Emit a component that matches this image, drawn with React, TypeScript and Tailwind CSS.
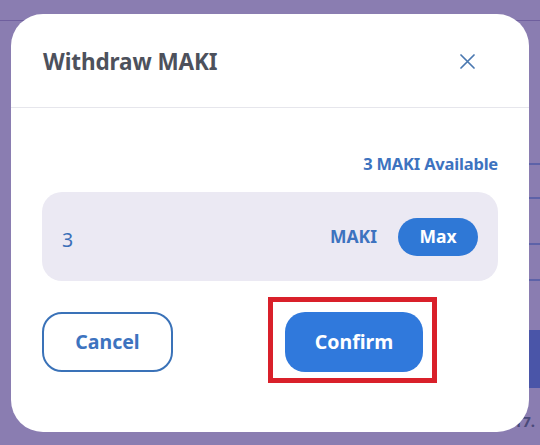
import React from "react";

export default function App() {
  return (
    <div
      className="relative w-[540px] h-[445px] overflow-hidden bg-[#8a7db1]"
      style={{ fontFamily: '"Noto Sans", "Open Sans", sans-serif' }}
    >
      {/* background hints behind overlay */}
      <div className="absolute left-0 right-0 top-[20px] h-px bg-[#6f5f9e]" />
      <div className="absolute left-[528px] right-0 top-[163px] h-[2px] bg-[#5d62a8]" />
      <div className="absolute left-[528px] right-0 top-[197px] h-[2px] bg-[#5d62a8]" />
      <div className="absolute left-[528px] right-0 top-[243px] h-[2px] bg-[#5d62a8]" />
      <div className="absolute left-[528px] right-0 top-[279px] h-[2px] bg-[#5d62a8]" />
      <div className="absolute left-[528px] right-0 top-[330px] h-[58px] bg-[#4a55a8]" />
      <div className="absolute left-[505px] top-[410px] text-[15px] font-bold text-[#4a4a7a]">617.</div>

      {/* modal */}
      <div className="absolute left-[11px] top-[14px] w-[518px] h-[418px] rounded-[32px] bg-white flex flex-col">
        <div className="h-[94px] flex items-center justify-between pt-[3px] pl-[32px] pr-[54px] border-b border-[#e6e6ec]">
          <h2 className="text-[22.5px] font-bold text-[#4d515c] tracking-[-0.1px]">Withdraw MAKI</h2>
          <svg width="15" height="15" viewBox="0 0 15 15" className="text-[#4a78b0] mb-[2px]">
            <path d="M1 1 L14 14 M14 1 L1 14" stroke="currentColor" strokeWidth="1.7" strokeLinecap="round" />
          </svg>
        </div>
        <div className="flex flex-col px-[31px]">
          <div className="flex justify-end mt-[45px] h-[22px] items-center">
            <span className="text-[16.5px] font-bold text-[#3d73bf] tracking-[-0.2px]">3 MAKI Available</span>
          </div>
          <div className="mt-[17px] h-[89px] rounded-[20px] bg-[#ebe9f3] flex items-center pl-[20px] pr-[20px]">
            <span className="text-[19.5px] text-[#3a6fb8] flex-1 pt-[6px]">3</span>
            <span className="text-[17.5px] font-bold text-[#3d73bf] mr-[21px]">MAKI</span>
            <button className="w-[80px] h-[38px] rounded-full bg-[#2f78d6] text-white text-[17.5px] font-bold">Max</button>
          </div>
          <div className="mt-[31px] flex items-start">
            <button className="w-[131px] h-[60px] rounded-[20px] border-2 border-[#3a72b8] text-[#3d73bf] text-[19.5px] font-bold">
              Cancel
            </button>
            <div className="relative ml-[112px]">
              <button className="w-[138px] h-[60px] rounded-[20px] bg-[#3079dc] text-white text-[19.5px] font-bold">
                Confirm
              </button>
              <div className="absolute left-[-17px] top-[-15px] w-[169px] h-[86px] border-[5px] border-[#d9202a] pointer-events-none" />
            </div>
          </div>
        </div>
      </div>
    </div>
  );
}
